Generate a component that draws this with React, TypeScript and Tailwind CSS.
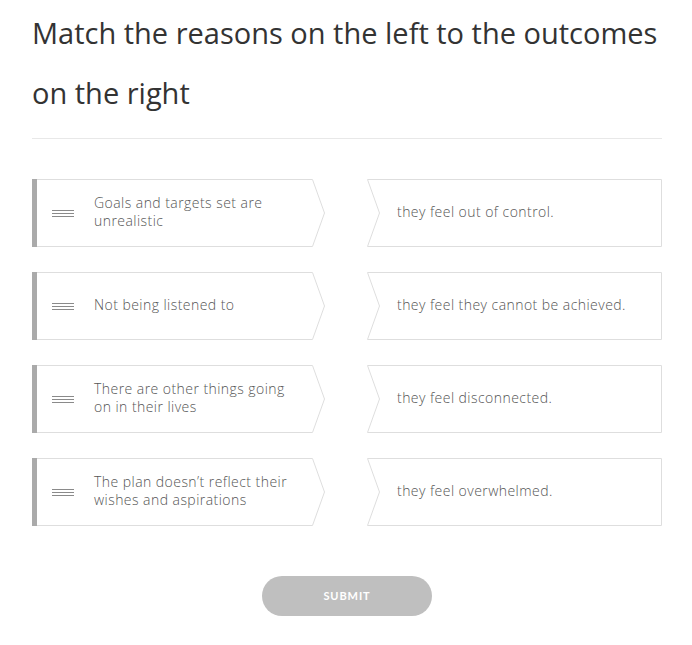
import React from "react";

const left = [
  "Goals and targets set are unrealistic",
  "Not being listened to",
  "There are other things going on in their lives",
  "The plan doesn\u2019t reflect their wishes and aspirations",
];
const right = [
  "they feel out of control.",
  "they feel they cannot be achieved.",
  "they feel disconnected.",
  "they feel overwhelmed.",
];

function LeftCard({ text }: { text: string }) {
  return (
    <div className="relative h-[68px] w-[293px]">
      <svg className="absolute inset-0" width="293" height="68" viewBox="0 0 293 68">
        <polygon points="0.5,0.5 280.5,0.5 292.5,34 280.5,67.5 0.5,67.5" fill="#fff" stroke="#dedede" strokeWidth="1" />
      </svg>
      <div className="relative flex h-full items-center">
        <div className="h-full w-[5px] bg-[#aaaaaa]" />
        <div className="ml-[15px] flex w-[22px] flex-col gap-[2px]">
          <div className="h-px bg-[#8a8a8a]" />
          <div className="h-px bg-[#8a8a8a]" />
          <div className="h-px bg-[#8a8a8a]" />
        </div>
        <div className="ml-[20px] mb-[3px] w-[200px] text-[14px] font-light leading-[18px] tracking-[0.45px] text-[#555]">{text}</div>
      </div>
    </div>
  );
}

function RightCard({ text }: { text: string }) {
  return (
    <div className="relative h-[68px] w-[295px]">
      <svg className="absolute inset-0" width="295" height="68" viewBox="0 0 295 68">
        <polygon points="0.5,0.5 294.5,0.5 294.5,67.5 0.5,67.5 12.5,34" fill="#fff" stroke="#dedede" strokeWidth="1" />
      </svg>
      <div className="relative flex h-full items-center pb-[3px] pl-[30px] text-[14px] font-light leading-[18px] tracking-[0.45px] text-[#555]">{text}</div>
    </div>
  );
}

export default function App() {
  return (
    <div className="min-h-[645px] bg-white px-[32px] pt-[3px]" style={{ fontFamily: "'Open Sans', 'Noto Sans', sans-serif" }}>
      <div className="w-[630px]">
        <h1 className="text-[29px] font-normal leading-[60px] text-[#333]">
          Match the reasons on the left to the outcomes on the right
        </h1>
        <div className="mt-[15px] h-px bg-[#e8e8e8]" />
        <div className="mt-[40px] grid grid-cols-[293px_295px] gap-x-[42px] gap-y-[25px]">
          {left.map((l, i) => (
            <React.Fragment key={i}>
              <LeftCard text={l} />
              <RightCard text={right[i]} />
            </React.Fragment>
          ))}
        </div>
        <div className="mt-[50px] flex justify-center">
          <button
            className="h-[40px] w-[170px] rounded-full bg-[#bfbfbf] text-[11px] font-bold tracking-[0.9px] text-white"
            style={{ fontFamily: "Lato, sans-serif" }}
          >
            SUBMIT
          </button>
        </div>
      </div>
    </div>
  );
}
